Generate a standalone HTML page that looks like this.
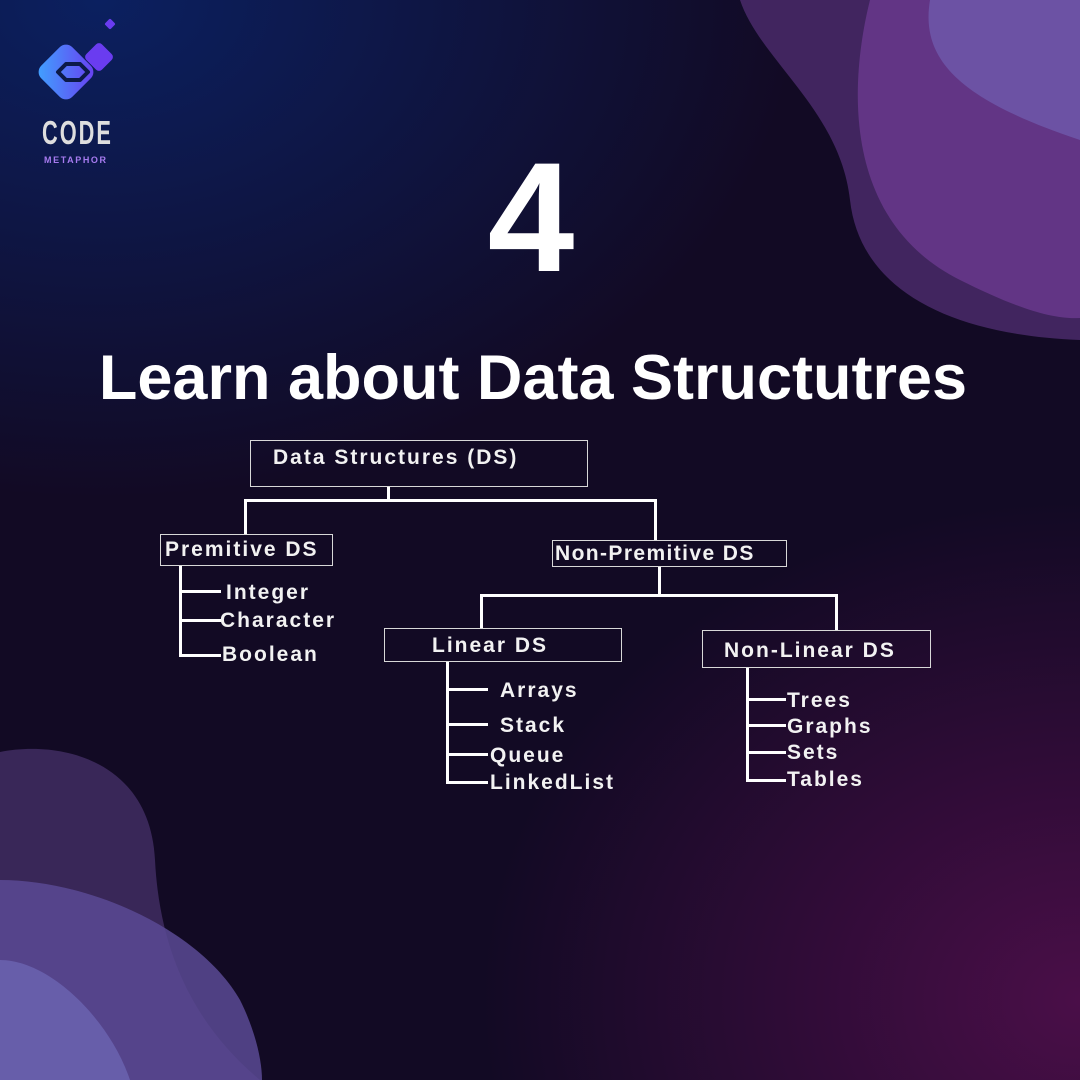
<!DOCTYPE html>
<html><head><style>
*{margin:0;padding:0}
body{width:1080px;height:1080px;overflow:hidden;position:relative;font-family:"Liberation Sans",sans-serif;
background:radial-gradient(ellipse 700px 500px at 100px 0px,#0b2060 0%,rgba(11,32,96,0) 100%),
radial-gradient(ellipse 600px 500px at 1080px 1000px,#4a0e48 0%,rgba(74,14,72,0) 100%),#120a24;}
.t{position:absolute;color:#fff;white-space:nowrap}
.box{position:absolute;border:1.5px solid #d8d8d8;box-sizing:border-box}
.l{position:absolute;background:#fff}
.d{font-size:21px;font-weight:bold;letter-spacing:2px;color:#f2f2f2}
</style></head><body>
<svg width="1080" height="1080" style="position:absolute;left:0;top:0">
<path d="M740 0 C760 60 840 110 850 200 C860 290 950 335 1080 340 L1080 0Z" fill="#4a2a6a" opacity="0.85"/>
<path d="M870 0 C850 80 840 220 960 280 C1010 305 1050 320 1080 318 L1080 0Z" fill="#6a3a8e" opacity="0.8"/>
<path d="M930 0 C920 60 960 100 1080 140 L1080 0Z" fill="#7060b0" opacity="0.7"/>
<path d="M0 752 C60 740 150 760 155 860 C160 960 200 1030 260 1080 L0 1080Z" fill="#3e2a5e" opacity="0.9"/>
<path d="M0 880 C90 880 200 930 240 1000 C255 1030 262 1060 262 1080 L0 1080Z" fill="#5a4a94" opacity="0.85"/>
<path d="M0 960 C50 960 110 1020 130 1080 L0 1080Z" fill="#6f6ab8" opacity="0.7"/>
<defs><linearGradient id="g" x1="0" y1="1" x2="1" y2="0"><stop offset="0" stop-color="#3fa4ff"/><stop offset="1" stop-color="#6a3cf0"/></linearGradient></defs>
<rect x="88" y="46" width="22" height="22" rx="4" transform="rotate(45 99 57)" fill="#6a3cf0"/>
<rect x="44" y="50" width="44" height="44" rx="9" transform="rotate(45 66 72)" fill="url(#g)"/>
<path d="M58 72 L66 64 L80 64 L88 72 L80 80 L66 80 Z" fill="none" stroke="#0c1a48" stroke-width="4" stroke-linejoin="round"/>
<rect x="106" y="20" width="8" height="8" rx="1.5" transform="rotate(45 110 24)" fill="#6a3cf0"/>
</svg>
<div class="t" style="left:42px;top:114px;font-size:33px;font-weight:bold;color:#dedede;transform:scaleX(0.66);transform-origin:left;letter-spacing:3px">CODE</div>
<div class="t" style="left:44px;top:155px;font-size:9px;font-weight:bold;color:#a77bf0;letter-spacing:1.6px">METAPHOR</div>
<div class="t" style="left:0;width:1062px;text-align:center;top:140px;font-size:156px;font-weight:bold;line-height:156px">4</div>
<div class="t" style="left:0;width:1066px;text-align:center;top:342px;font-size:63px;font-weight:bold;line-height:72px">Learn about Data Structutres</div>

<div class="box" style="left:250px;top:440px;width:338px;height:47px"></div>
<div class="t d" style="left:273px;top:446px">Data Structures (DS)</div>
<div class="l" style="left:387px;top:487px;width:3px;height:14px"></div>
<div class="l" style="left:244px;top:499px;width:413px;height:3px"></div>
<div class="l" style="left:244px;top:499px;width:3px;height:36px"></div>
<div class="l" style="left:654px;top:499px;width:3px;height:41px"></div>

<div class="box" style="left:160px;top:534px;width:173px;height:32px"></div>
<div class="t d" style="left:165px;top:538px">Premitive DS</div>
<div class="box" style="left:552px;top:540px;width:235px;height:27px"></div>
<div class="t d" style="left:555px;top:542px;letter-spacing:1.4px">Non-Premitive DS</div>

<div class="l" style="left:179px;top:566px;width:3px;height:91px"></div>
<div class="l" style="left:179px;top:590px;width:42px;height:3px"></div>
<div class="l" style="left:179px;top:619px;width:42px;height:3px"></div>
<div class="l" style="left:179px;top:654px;width:42px;height:3px"></div>
<div class="t d" style="left:226px;top:581px">Integer</div>
<div class="t d" style="left:220px;top:609px">Character</div>
<div class="t d" style="left:222px;top:643px">Boolean</div>

<div class="l" style="left:658px;top:567px;width:3px;height:29px"></div>
<div class="l" style="left:480px;top:594px;width:358px;height:3px"></div>
<div class="l" style="left:480px;top:594px;width:3px;height:34px"></div>
<div class="l" style="left:835px;top:594px;width:3px;height:36px"></div>

<div class="box" style="left:384px;top:628px;width:238px;height:34px"></div>
<div class="t d" style="left:432px;top:634px">Linear DS</div>
<div class="box" style="left:702px;top:630px;width:229px;height:38px"></div>
<div class="t d" style="left:724px;top:639px">Non-Linear DS</div>

<div class="l" style="left:446px;top:662px;width:3px;height:122px"></div>
<div class="l" style="left:446px;top:688px;width:42px;height:3px"></div>
<div class="l" style="left:446px;top:723px;width:42px;height:3px"></div>
<div class="l" style="left:446px;top:753px;width:42px;height:3px"></div>
<div class="l" style="left:446px;top:781px;width:42px;height:3px"></div>
<div class="t d" style="left:500px;top:679px">Arrays</div>
<div class="t d" style="left:500px;top:714px">Stack</div>
<div class="t d" style="left:490px;top:744px">Queue</div>
<div class="t d" style="left:490px;top:771px">LinkedList</div>

<div class="l" style="left:746px;top:668px;width:3px;height:114px"></div>
<div class="l" style="left:746px;top:698px;width:40px;height:3px"></div>
<div class="l" style="left:746px;top:724px;width:40px;height:3px"></div>
<div class="l" style="left:746px;top:751px;width:40px;height:3px"></div>
<div class="l" style="left:746px;top:779px;width:40px;height:3px"></div>
<div class="t d" style="left:787px;top:689px">Trees</div>
<div class="t d" style="left:787px;top:715px">Graphs</div>
<div class="t d" style="left:787px;top:741px">Sets</div>
<div class="t d" style="left:787px;top:768px">Tables</div>
</body></html>
